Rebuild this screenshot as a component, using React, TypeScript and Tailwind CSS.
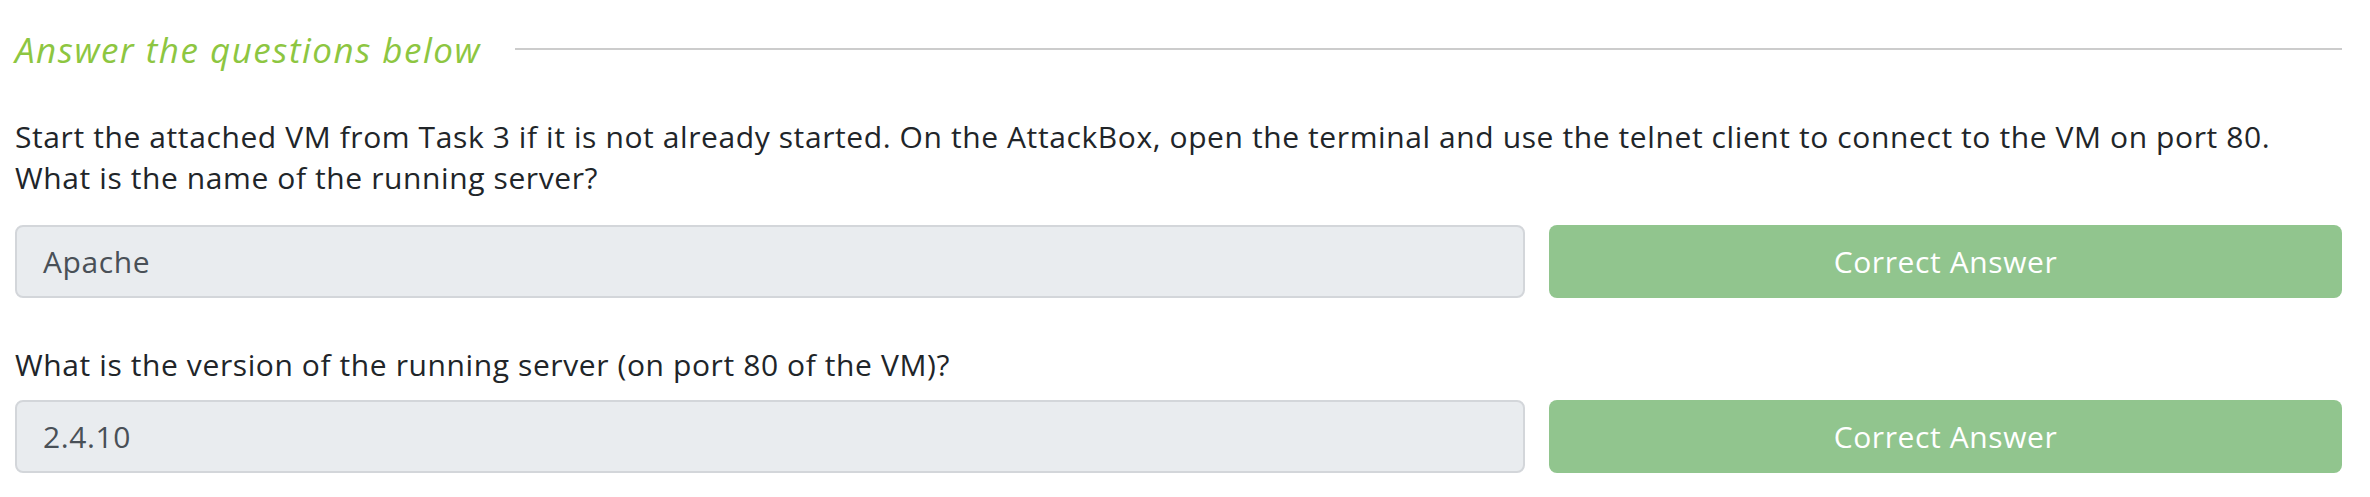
import React from "react";

const font = { fontFamily: "'Open Sans', 'Noto Sans', 'Liberation Sans', sans-serif" };

function AnswerRow({ value }: { value: string }) {
  return (
    <div className="flex gap-[24px] h-[73px]">
      <div className="flex-1 flex items-center rounded-[8px] border-2 border-[#d3d6da] bg-[#e9ecef] pl-[26px] text-[30px] tracking-[0.6px] text-[#495057]">
        {value}
      </div>
      <div className="w-[793px] flex items-center justify-center rounded-[8px] bg-[#91c58e] text-[30px] tracking-[0.6px] text-white">
        Correct Answer
      </div>
    </div>
  );
}

export default function App() {
  return (
    <div className="w-[2370px] h-[497px] bg-white pl-[15px] pr-[28px] pt-[32px] overflow-hidden" style={font}>
      <div className="flex items-center gap-[34px] h-[36px]">
        <h3 className="italic font-medium text-[35px] leading-[36px] tracking-[1.5px] text-[#8dc641] whitespace-nowrap">Answer the questions below</h3>
        <div className="flex-1 h-[2px] bg-[#cccccc] mt-[-2px]" />
      </div>
      <p className="mt-[48px] text-[30px] leading-[41px] tracking-[0.6px] text-[#212529] whitespace-nowrap">
        Start the attached VM from Task 3 if it is not already started. On the AttackBox, open the terminal and use the telnet client to connect to the VM on port 80.
        <br />
        What is the name of the running server?
      </p>
      <div className="mt-[27px]">
        <AnswerRow value="Apache" />
      </div>
      <p className="mt-[46px] text-[30px] leading-[41px] tracking-[0.6px] text-[#212529]">
        What is the version of the running server (on port 80 of the VM)?
      </p>
      <div className="mt-[15px]">
        <AnswerRow value="2.4.10" />
      </div>
    </div>
  );
}
